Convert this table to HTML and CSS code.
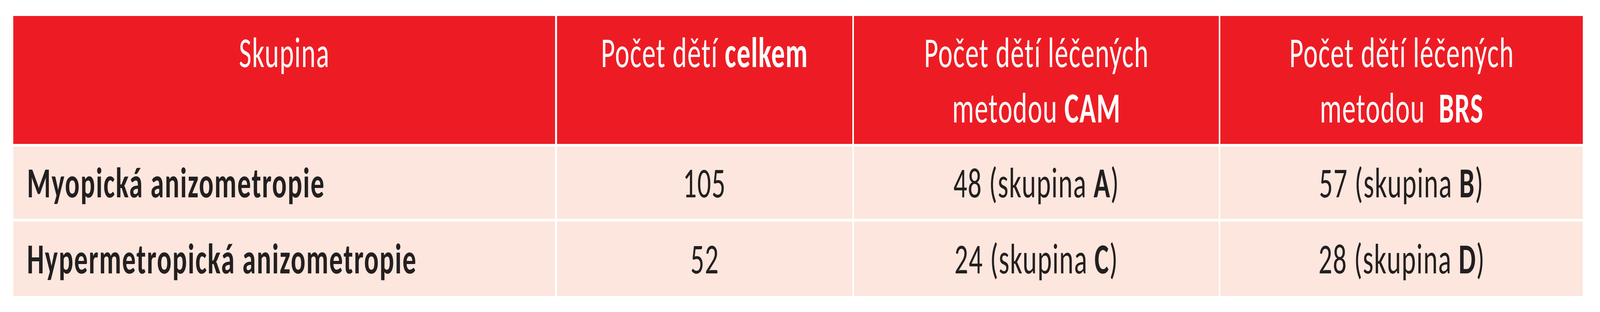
FILE: index.html
```html
<!DOCTYPE html>
<html lang="cs">
<head>
<meta charset="utf-8">
<title>Skupiny</title>
<link rel="stylesheet" href="styles.css">
<script src="script.js"></script>
</head>
<body>
<div class="data" role="table">
  <div class="cell head" role="columnheader"><span class="txt">Skupina</span></div>
  <div class="cell head" role="columnheader"><span class="txt">Počet dětí <b>celkem</b></span></div>
  <div class="cell head" role="columnheader"><span class="txt">Počet dětí léčených<br>metodou <b>CAM</b></span></div>
  <div class="cell head" role="columnheader"><span class="txt">Počet dětí léčených<br>metodou&nbsp; <b>BRS</b></span></div>

  <div class="cell body label" role="rowheader"><span class="txt">Myopická anizometropie</span></div>
  <div class="cell body" role="cell"><span class="txt">105</span></div>
  <div class="cell body" role="cell"><span class="txt">48 (skupina <b>A</b>)</span></div>
  <div class="cell body" role="cell"><span class="txt">57 (skupina <b>B</b>)</span></div>

  <div class="cell body label" role="rowheader"><span class="txt">Hypermetropická anizometropie</span></div>
  <div class="cell body" role="cell"><span class="txt">52</span></div>
  <div class="cell body" role="cell"><span class="txt">24 (skupina <b>C</b>)</span></div>
  <div class="cell body" role="cell"><span class="txt">28 (skupina <b>D</b>)</span></div>
</div>
</body>
</html>
```

FILE: script.js
```js
(function () {
  function fit() {
    var sx = window.innerWidth / 6482;
    if (sx > 1) sx = 1;
    document.documentElement.style.setProperty('--sx', String(sx));
  }
  fit();
  window.addEventListener('resize', fit);
})();
```

FILE: styles.css
```css
:root {
  --sx: 1;
}

html, body {
  margin: 0;
  padding: 0;
  background: #ffffff;
  overflow-x: hidden;
}

.data {
  display: grid;
  grid-template-columns: 2195fr 1197fr 1477fr 1469fr;
  grid-template-rows: 328px 185px 191px;
  gap: 7px 0.108vw;
  margin: 41px 1.0645vw 0 0.8331vw;
  font-family: Carlito, Lato, "Open Sans", sans-serif;
  font-size: 110px;
  line-height: 142px;
  letter-spacing: 2.5px;
}

.cell {
  min-width: 0;
  display: flex;
  justify-content: center;
  white-space: nowrap;
}

.txt {
  display: inline-block;
  flex: none;
  text-align: center;
  transform: scaleX(var(--sx));
  transform-origin: 50% 50%;
}

.head {
  background: #ed1c24;
  color: #ffffff;
  font-weight: 400;
  align-items: flex-start;
  padding-top: 23px;
}

.body {
  background: #fce6dd;
  color: #231f20;
  align-items: center;
}

.cell b {
  font-weight: 700;
}

.body.label {
  justify-content: flex-start;
  padding-left: 0.8485vw;
  font-weight: 700;
  letter-spacing: 3.5px;
}

.body.label .txt {
  text-align: left;
  transform-origin: 0 50%;
}
```
